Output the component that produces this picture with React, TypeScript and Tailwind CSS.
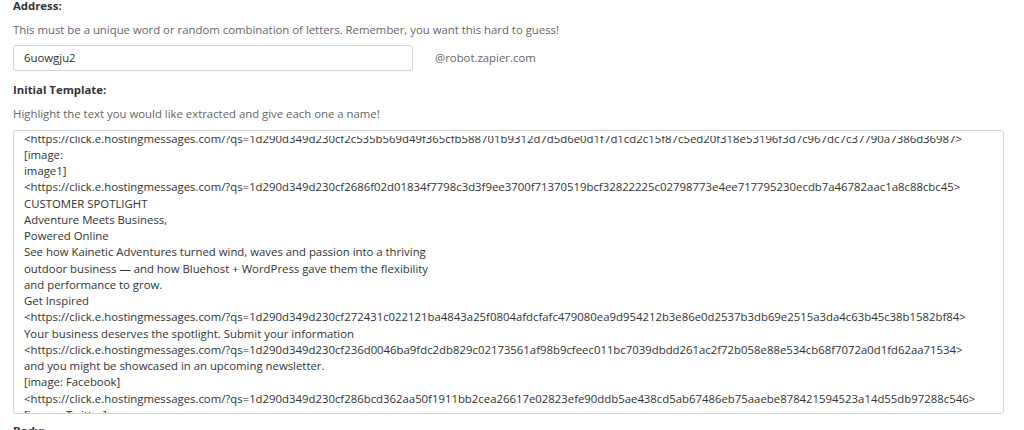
const lines = [
  '<https://click.e.hostingmessages.com/?qs=1d290d349d230cf2c535b569d49f365cfb588701b9312d7d5d6e0d1f7d1cd2c15f87c5ed20f318e53196f3d7c967dc7c37790a7386d36987>',
  '[image:',
  'image1]',
  '<https://click.e.hostingmessages.com/?qs=1d290d349d230cf2686f02d01834f7798c3d3f9ee3700f71370519bcf32822225c02798773e4ee717795230ecdb7a46782aac1a8c88cbc45>',
  'CUSTOMER SPOTLIGHT',
  'Adventure Meets Business,',
  'Powered Online',
  'See how Kainetic Adventures turned wind, waves and passion into a thriving',
  'outdoor business \u2014 and how Bluehost + WordPress gave them the flexibility',
  'and performance to grow.',
  'Get Inspired',
  '<https://click.e.hostingmessages.com/?qs=1d290d349d230cf272431c022121ba4843a25f0804afdcfafc479080ea9d954212b3e86e0d2537b3db69e2515a3da4c63b45c38b1582bf84>',
  'Your business deserves the spotlight. Submit your information',
  '<https://click.e.hostingmessages.com/?qs=1d290d349d230cf236d0046ba9fdc2db829c02173561af98b9cfeec011bc7039dbdd261ac2f72b058e88e534cb68f7072a0d1fd62aa71534>',
  'and you might be showcased in an upcoming newsletter.',
  '[image: Facebook]',
  '<https://click.e.hostingmessages.com/?qs=1d290d349d230cf286bcd362aa50f1911bb2cea26617e02823efe90ddb5ae438cd5ab67486eb75aaebe878421594523a14d55db97288c546>',
  '[image: Twitter]',
];

export default function App() {
  return (
    <div className="w-[1024px] h-[430px] overflow-hidden bg-white px-[13px] font-['Open_Sans',sans-serif] text-[11.375px] leading-[16.25px] text-[#333]">
      <div className="-mt-[2px] h-4 font-bold">Address:</div>
      <p className="mt-2 text-[#666]">
        This must be a unique word or random combination of letters. Remember, you want this hard to guess!
      </p>
      <div className="mt-[7px] flex items-center gap-[22px]">
        <div className="h-[26px] w-[400px] rounded-[3px] border border-[#d4d4d4] pl-[10px] leading-6">6uowgju2</div>
        <span className="text-[#666]">@robot.zapier.com</span>
      </div>
      <div className="mt-[11px] h-4 font-bold">Initial Template:</div>
      <p className="mt-2 text-[#666]">Highlight the text you would like extracted and give each one a name!</p>
      <div className="mt-[7px] h-[284px] w-[991px] rounded-[3px] border border-[#d4d4d4] px-[10px] pt-[5px]">
        <div className="h-full overflow-hidden">
          <div className="-mt-[5px] whitespace-pre">
            {lines.map((l, i) => (
              <div key={i}>{l}</div>
            ))}
          </div>
        </div>
      </div>
      <div className="mt-[9px] h-4 font-bold">Body:</div>
    </div>
  );
}
